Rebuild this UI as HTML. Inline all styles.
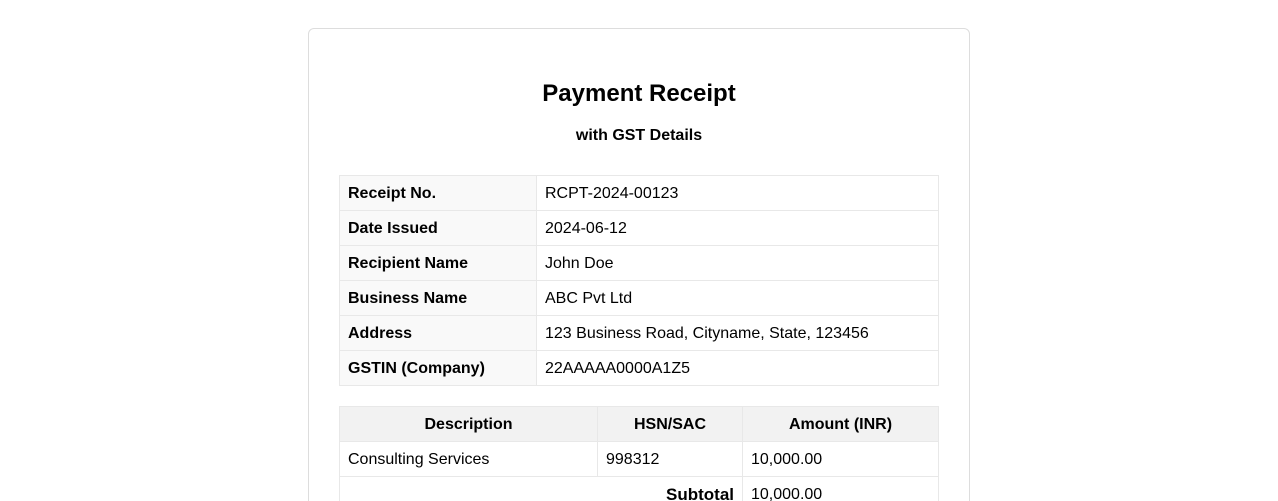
<!DOCTYPE html>
<html><head><meta charset="utf-8"><style>
html,body{margin:0;padding:0;background:#fff;height:501px;overflow:hidden;}
body{width:1278px;font-family:"Liberation Sans",Arial,sans-serif;color:#000;position:relative;}
.card{position:absolute;left:308px;top:28px;width:662px;height:520px;border:1px solid #ddd;border-radius:6px;box-sizing:border-box;}
h1{position:absolute;left:0;right:0;top:79px;margin:0;text-align:center;font-size:24px;font-weight:bold;line-height:30px;}
h2{position:absolute;left:0;right:0;top:126px;margin:0;text-align:center;font-size:16px;font-weight:bold;line-height:20px;}
table{position:absolute;left:339px;width:600px;border-collapse:collapse;font-size:16px;}
td,th{border:1px solid #e8e8e8;height:35px;box-sizing:border-box;padding:2px 8px 0;text-align:left;}
.t1{top:175px;}
.t1 td.l{background:#f9f9f9;font-weight:bold;width:197px;}
.t2{top:406px;}
.t2 th{background:#f2f2f2;text-align:center;font-weight:bold;}
</style></head><body>
<div class="card"></div>
<h1>Payment Receipt</h1>
<h2>with GST Details</h2>
<table class="t1">
<tr><td class="l">Receipt No.</td><td>RCPT-2024-00123</td></tr>
<tr><td class="l">Date Issued</td><td>2024-06-12</td></tr>
<tr><td class="l">Recipient Name</td><td>John Doe</td></tr>
<tr><td class="l">Business Name</td><td>ABC Pvt Ltd</td></tr>
<tr><td class="l">Address</td><td>123 Business Road, Cityname, State, 123456</td></tr>
<tr><td class="l">GSTIN (Company)</td><td>22AAAAA0000A1Z5</td></tr>
</table>
<table class="t2">
<tr><th style="width:258px">Description</th><th style="width:145px">HSN/SAC</th><th>Amount (INR)</th></tr>
<tr><td>Consulting Services</td><td>998312</td><td>10,000.00</td></tr>
<tr><td colspan="2" style="text-align:right;font-weight:bold;font-size:17px">Subtotal</td><td>10,000.00</td></tr>
</table>
</body></html>
